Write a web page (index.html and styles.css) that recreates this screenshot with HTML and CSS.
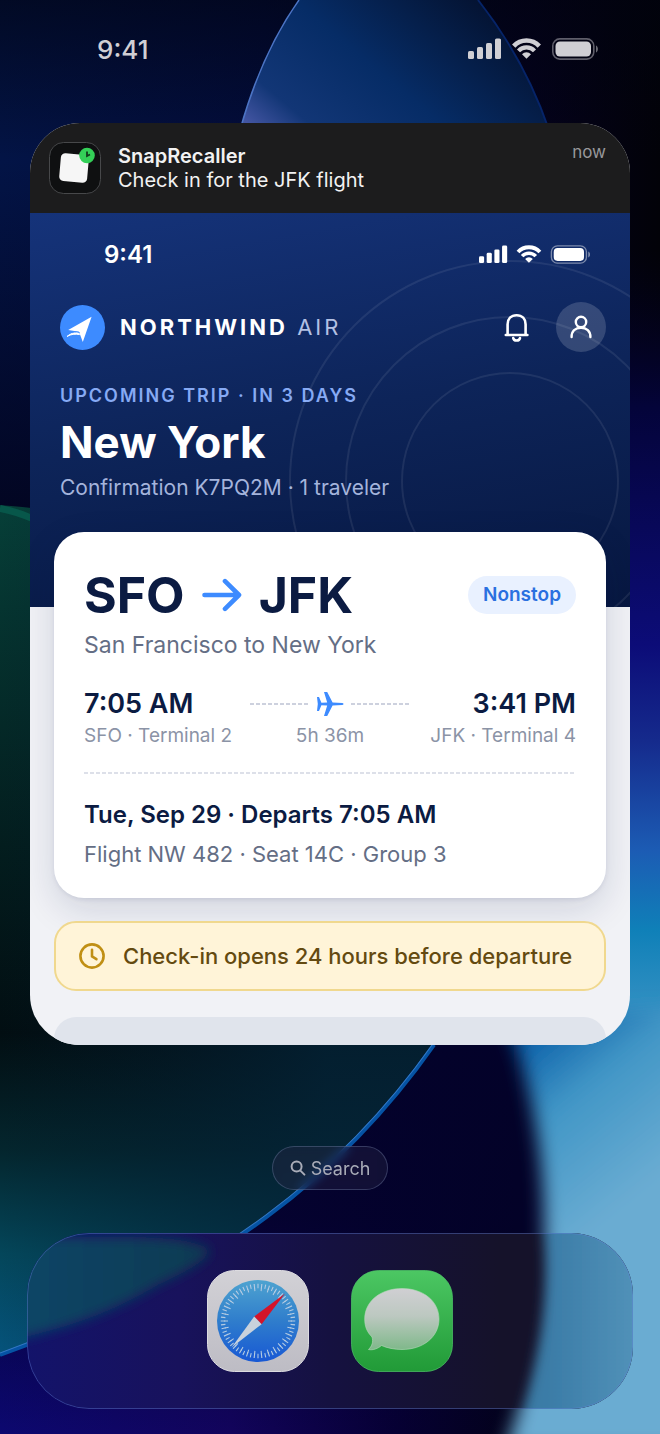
FILE: index.html
```html
<!DOCTYPE html>
<html lang="en">
<head>
    <meta charset="UTF-8">
    <meta name="viewport" content="width=device-width, initial-scale=1.0">
    <title>SnapRecaller</title>
    <link rel="stylesheet" href="styles.css">
</head>
<body>
    <!-- Shared icons -->
    <svg class="icon-defs" aria-hidden="true">
        <symbol id="status-icons" viewBox="0 0 130 22">
            <g fill="currentColor">
                <rect x="0" y="13" width="6" height="8" rx="1.6"/>
                <rect x="9" y="9" width="6" height="12" rx="1.6"/>
                <rect x="18" y="5" width="6" height="16" rx="1.6"/>
                <rect x="27" y="0.5" width="6" height="20.5" rx="1.6"/>
                <path d="M58.5 20.8 L54 16.2 A6.4 6.4 0 0 1 63 16.2 Z"/>
                <rect x="87.5" y="3.5" width="35.5" height="15" rx="4.5"/>
                <path d="M128 7.5 C130.6 8.8 130.6 13.2 128 14.5 Z" opacity="0.5"/>
            </g>
            <g fill="none" stroke="currentColor">
                <path d="M45.7 8.1 A17.5 17.5 0 0 1 71.3 8.1" stroke-width="4.6"/>
                <path d="M50.5 12.9 A11 11 0 0 1 66.5 12.9" stroke-width="4.2"/>
                <rect x="84.8" y="0.9" width="41" height="20.2" rx="7" stroke-width="1.6" opacity="0.45"/>
            </g>
        </symbol>
    </svg>

    <div class="phone">
        <svg class="wallpaper" viewBox="0 0 660 1434" preserveAspectRatio="none" aria-hidden="true">
            <defs>
                <linearGradient id="base" x1="0" y1="0" x2="1" y2="0">
                    <stop offset="0" stop-color="#031446"/>
                    <stop offset="0.4" stop-color="#030d3d"/>
                    <stop offset="0.8" stop-color="#04021e"/>
                    <stop offset="1" stop-color="#020208"/>
                </linearGradient>
                <linearGradient id="topShade" x1="0" y1="0" x2="0" y2="1">
                    <stop offset="0" stop-color="#01030f" stop-opacity="0.6"/>
                    <stop offset="1" stop-color="#01030f" stop-opacity="0"/>
                </linearGradient>
                <linearGradient id="leftShade" x1="0" y1="0" x2="0" y2="1">
                    <stop offset="0" stop-color="#02031c" stop-opacity="0"/>
                    <stop offset="1" stop-color="#02031c" stop-opacity="0.85"/>
                </linearGradient>
                <linearGradient id="rightEdge" x1="0" y1="0" x2="0" y2="1">
                    <stop offset="0" stop-color="#03021e" stop-opacity="0"/>
                    <stop offset="0.2" stop-color="#04043a"/>
                    <stop offset="0.5" stop-color="#0c0c78"/>
                    <stop offset="0.62" stop-color="#152a8c"/>
                    <stop offset="0.76" stop-color="#1c5cb4"/>
                    <stop offset="0.86" stop-color="#0f80b8"/>
                    <stop offset="1" stop-color="#4196c6"/>
                </linearGradient>
                <linearGradient id="night" x1="0" y1="0" x2="1" y2="0">
                    <stop offset="0" stop-color="#0c0870"/>
                    <stop offset="0.35" stop-color="#12045c"/>
                    <stop offset="0.6" stop-color="#060034"/>
                    <stop offset="0.78" stop-color="#03021a"/>
                </linearGradient>
                <linearGradient id="nightShade" x1="0" y1="0" x2="0" y2="1">
                    <stop offset="0" stop-color="#03022a"/>
                    <stop offset="0.5" stop-color="#03022a" stop-opacity="0.85"/>
                    <stop offset="1" stop-color="#03022a" stop-opacity="0"/>
                </linearGradient>
                <linearGradient id="orb" x1="0" y1="0.9" x2="1" y2="0.4">
                    <stop offset="0" stop-color="#4355a2"/>
                    <stop offset="0.16" stop-color="#123676"/>
                    <stop offset="0.5" stop-color="#062c66"/>
                    <stop offset="1" stop-color="#041230"/>
                </linearGradient>
                <linearGradient id="teal" x1="0" y1="505" x2="0" y2="1355" gradientUnits="userSpaceOnUse">
                    <stop offset="0" stop-color="#063f38"/>
                    <stop offset="0.12" stop-color="#053430"/>
                    <stop offset="0.4" stop-color="#031d1e"/>
                    <stop offset="0.62" stop-color="#020e12"/>
                    <stop offset="0.76" stop-color="#04262e"/>
                    <stop offset="0.88" stop-color="#04465a"/>
                    <stop offset="1" stop-color="#05537c"/>
                </linearGradient>
                <linearGradient id="tealShade" x1="0" y1="0" x2="1" y2="0">
                    <stop offset="0" stop-color="#04182c" stop-opacity="0"/>
                    <stop offset="0.7" stop-color="#042236" stop-opacity="0.8"/>
                </linearGradient>
                <linearGradient id="glow" x1="520" y1="1040" x2="640" y2="1190" gradientUnits="userSpaceOnUse">
                    <stop offset="0" stop-color="#0a5fa8"/>
                    <stop offset="0.4" stop-color="#4196c6"/>
                    <stop offset="1" stop-color="#6aacd2"/>
                </linearGradient>
                <filter id="soft" x="-20%" y="-20%" width="140%" height="140%">
                    <feGaussianBlur stdDeviation="9"/>
                </filter>
            </defs>
            <rect width="660" height="1434" fill="url(#base)"/>
            <rect width="660" height="160" fill="url(#topShade)"/>
            <rect y="160" width="200" height="350" fill="url(#leftShade)"/>
            <path d="M299 0 C272 38 254 80 240 130 H549 C532 80 508 38 478 0 Z" fill="url(#orb)"/>
            <path d="M299 0 C272 38 254 80 240 130" fill="none" stroke="#4c74c4" stroke-width="1.5"/>
            <path d="M478 0 C508 38 532 80 549 130" fill="none" stroke="#062468" stroke-width="2"/>
            <rect y="1000" width="660" height="434" fill="url(#night)"/>
            <rect y="1000" width="660" height="434" fill="url(#nightShade)"/>
            <rect x="600" y="250" width="60" height="790" fill="url(#rightEdge)"/>
            <path d="M490 990 C540 1070 575 1260 505 1450 H700 V1010 H600 Z" fill="url(#glow)" filter="url(#soft)"/>
            <path d="M0 505 C300 520 560 870 433 1045 C345 1170 220 1275 0 1355 Z" fill="url(#teal)"/>
            <path d="M0 505 C300 520 560 870 433 1045 C345 1170 220 1275 0 1355 Z" fill="url(#tealShade)"/>
            <path d="M0 508 Q16 511 32 518" fill="none" stroke="#07574a" stroke-width="7"/>
            <path d="M434 1044 C346 1169 221 1274 0 1354" fill="none" stroke="#0553a4" stroke-width="4"/>
            <path d="M433 1043 C345 1167 220 1272 0 1352" fill="none" stroke="#3477c4" stroke-width="1"/>
        </svg>

        <div class="status-bar">
            <span class="status-time">9:41</span>
            <svg class="status-icons" role="img" aria-label="Signal, Wi-Fi and battery"><use href="#status-icons"/></svg>
        </div>

        <article class="notification">
            <header class="notification-header">
                <svg class="app-icon" viewBox="0 0 52 52" aria-hidden="true">
                    <rect x="0.5" y="0.5" width="51" height="51" rx="14" fill="#0f1011" stroke="#47484a"/>
                    <rect x="11" y="12" width="28" height="28" rx="4.5" fill="#f6f6f6" transform="rotate(5 25 26)"/>
                    <circle cx="38" cy="13.5" r="7.8" fill="#34d058"/>
                    <path d="M38 9.5 V14 L41 12.5" fill="none" stroke="#123c1d" stroke-width="1.8"/>
                </svg>
                <div class="notification-text">
                    <h1 class="notification-title">SnapRecaller</h1>
                    <p class="notification-body">Check in for the JFK flight</p>
                </div>
                <time class="notification-time">now</time>
            </header>

            <!-- Airline app preview -->
            <section class="hero">
                <svg class="rings" viewBox="0 0 345 394" aria-hidden="true">
                    <g fill="none" stroke="#ffffff" stroke-opacity="0.08" stroke-width="2">
                        <circle cx="225" cy="268" r="108"/>
                        <circle cx="225" cy="268" r="164"/>
                        <circle cx="225" cy="268" r="220"/>
                    </g>
                </svg>
                <div class="hero-status">
                    <span class="status-time">9:41</span>
                    <svg class="hero-status-icons" role="img" aria-label="Signal, Wi-Fi and battery"><use href="#status-icons"/></svg>
                </div>
                <div class="brand-row">
                    <svg class="brand-logo" viewBox="0 0 45 45" aria-hidden="true">
                        <circle cx="22.5" cy="22.5" r="22.5" fill="#3d8bff"/>
                        <path d="M31.6 11.8 L8.2 25 L19 26.8 L22.8 37 Z" fill="#fff"/>
                        <path d="M7 31.5 C11 29 15.5 28.8 19.5 29.6 L18.5 27.5 C14.5 27.4 10.5 28.2 7 31.5 Z" fill="#fff" stroke="#fff"/>
                        <path d="M9.5 28 C13 26.6 16 26.5 19.5 27.5" fill="none" stroke="#3d8bff"/>
                    </svg>
                    <div class="brand-name"><strong>NORTHWIND</strong> AIR</div>
                    <button class="bell-btn" type="button" aria-label="Notifications">
                        <svg viewBox="0 0 28 30" fill="none" stroke="#fff" stroke-width="2.6" stroke-linecap="round" stroke-linejoin="round">
                            <path d="M4.6 22 V12.4 C4.6 6.8 8 3.2 13.6 3.2 C19.2 3.2 22.6 6.8 22.6 12.4 V22"/>
                            <path d="M2.8 23 H24.4"/>
                            <path d="M10.2 26 C10.8 29.4 16.4 29.4 17 26"/>
                        </svg>
                    </button>
                    <button class="profile-btn" type="button" aria-label="Profile">
                        <svg viewBox="0 0 28 28" fill="none" stroke="#fff" stroke-width="2.4" stroke-linecap="round">
                            <circle cx="14" cy="9" r="5.2"/>
                            <path d="M4.6 24 C4.6 18.2 8.4 14.8 14 14.8 C19.6 14.8 23.4 18.2 23.4 24"/>
                        </svg>
                    </button>
                </div>
                <p class="eyebrow">UPCOMING TRIP · IN 3 DAYS</p>
                <h2 class="trip-title">New York</h2>
                <p class="trip-sub">Confirmation K7PQ2M · 1 traveler</p>
            </section>

            <section class="trip">
                <div class="ticket">
                    <div class="route">
                        <span>SFO</span>
                        <svg class="route-arrow" viewBox="0 0 40 34" fill="none" stroke="#3d8bff" stroke-width="4.6" stroke-linecap="round" stroke-linejoin="round" role="img" aria-label="to">
                            <path d="M2.5 17 H36.5 M23 3.2 L37 17 L23 30.8"/>
                        </svg>
                        <span>JFK</span>
                        <span class="badge">Nonstop</span>
                    </div>
                    <p class="cities">San Francisco to New York</p>

                    <div class="times">
                        <div class="stop">
                            <p class="clock">7:05 AM</p>
                            <p class="terminal">SFO · Terminal 2</p>
                        </div>
                        <div class="leg">
                            <div class="leg-line">
                                <span class="dash"></span>
                                <svg class="plane" viewBox="0 0 28 26" fill="#3d8bff" aria-hidden="true">
                                    <path d="M8 1 H11.2 L16.6 11.6 L26.4 12 C28 12.4 28 13.6 26.4 14 L16.6 14.4 L11.2 25 H8 L11.2 14.4 L5.4 14.2 L3 20 H1 L1.8 13 L1 6 H3 L5.4 11.8 L11.2 11.6 Z"/>
                                </svg>
                                <span class="dash"></span>
                            </div>
                            <p class="terminal">5h 36m</p>
                        </div>
                        <div class="stop stop-end">
                            <p class="clock">3:41 PM</p>
                            <p class="terminal">JFK · Terminal 4</p>
                        </div>
                    </div>

                    <div class="divider"></div>
                    <p class="departs">Tue, Sep 29 · Departs 7:05 AM</p>
                    <p class="details">Flight NW 482 · Seat 14C · Group 3</p>
                </div>

                <div class="alert">
                    <svg class="alert-icon" viewBox="0 0 26 26" fill="none" stroke="#c08f14" stroke-width="2.6" stroke-linecap="round" stroke-linejoin="round" aria-hidden="true">
                        <circle cx="13" cy="13" r="11.6"/>
                        <path d="M13 6.8 V13.4 L17.4 16.2"/>
                    </svg>
                    <p>Check-in opens 24 hours before departure</p>
                </div>
                <div class="next-card"></div>
            </section>
        </article>

        <button class="search-btn" type="button">
            <svg viewBox="0 0 16 16" fill="none" stroke="currentColor" stroke-width="2" stroke-linecap="round" aria-hidden="true">
                <circle cx="6.6" cy="6.6" r="5"/>
                <path d="M10.4 10.6 L14.4 14.6"/>
            </svg>
            Search
        </button>

        <nav class="dock" aria-label="Dock">
            <svg class="dock-glass" viewBox="0 0 606 175" preserveAspectRatio="none" aria-hidden="true">
                <defs>
                    <linearGradient id="glass" x1="0" y1="0" x2="1" y2="0">
                        <stop offset="0" stop-color="#13136a"/>
                        <stop offset="0.25" stop-color="#18125c"/>
                        <stop offset="0.5" stop-color="#151140"/>
                        <stop offset="0.78" stop-color="#15122a"/>
                        <stop offset="1" stop-color="#15122a"/>
                    </linearGradient>
                    <linearGradient id="glassTeal" x1="0" y1="0" x2="1" y2="0">
                        <stop offset="0" stop-color="#0a4668"/>
                        <stop offset="1" stop-color="#0e3a52"/>
                    </linearGradient>
                    <linearGradient id="glassBlue" x1="0" y1="0" x2="1" y2="0">
                        <stop offset="0.2" stop-color="#3a7ba6"/>
                        <stop offset="1" stop-color="#5797bd"/>
                    </linearGradient>
                    <filter id="glassBlur" x="-20%" y="-30%" width="140%" height="160%">
                        <feGaussianBlur stdDeviation="6"/>
                    </filter>
                </defs>
                <rect width="606" height="175" fill="url(#glass)"/>
                <path d="M-20 4 H90 C130 4 165 6 182 16 C186 24 160 38 130 52 C90 76 50 92 -20 108 Z" fill="url(#glassTeal)" filter="url(#glassBlur)"/>
                <path d="M515 -20 C524 60 514 120 490 195 H630 V-20 Z" fill="url(#glassBlue)" filter="url(#glassBlur)"/>
            </svg>
            <a class="dock-app" href="#" aria-label="Safari">
                <svg viewBox="0 0 102 102" aria-hidden="true">
                    <defs>
                        <linearGradient id="safariBg" x1="0" y1="0" x2="0" y2="1">
                            <stop offset="0" stop-color="#d2d1d6"/>
                            <stop offset="1" stop-color="#bdbcc4"/>
                        </linearGradient>
                        <linearGradient id="safariDial" x1="0" y1="0" x2="0" y2="1">
                            <stop offset="0" stop-color="#4ea3d0"/>
                            <stop offset="0.5" stop-color="#2f7dcc"/>
                            <stop offset="1" stop-color="#1858d4"/>
                        </linearGradient>
                    </defs>
                    <rect x="0.5" y="0.5" width="101" height="101" rx="27" fill="url(#safariBg)" stroke="#dcdbe0"/>
                    <circle cx="51" cy="51" r="41" fill="url(#safariDial)"/>
                    <circle cx="51" cy="51" r="35" fill="none" stroke="#b4cbe2" stroke-width="4.5" pathLength="60" stroke-dasharray="0.3 0.7" stroke-dashoffset="0.15"/>
                    <circle cx="51" cy="51" r="32" fill="none" stroke="#b4cbe2" stroke-width="4" pathLength="30" stroke-dasharray="0.16 0.84" stroke-dashoffset="0.08"/>
                    <path d="M78 23.5 L47.2 46.6 L54.6 54.2 Z" fill="#d4142a"/>
                    <path d="M24.6 77.4 L47.2 46.6 L54.6 54.2 Z" fill="#c9d2dc"/>
                </svg>
            </a>
            <a class="dock-app" href="#" aria-label="Messages">
                <svg viewBox="0 0 102 102" aria-hidden="true">
                    <defs>
                        <linearGradient id="messagesBg" x1="0" y1="0" x2="0" y2="1">
                            <stop offset="0" stop-color="#4cc763"/>
                            <stop offset="1" stop-color="#219a37"/>
                        </linearGradient>
                        <linearGradient id="bubble" x1="0" y1="0" x2="0" y2="1">
                            <stop offset="0" stop-color="#d0cfd3"/>
                            <stop offset="0.45" stop-color="#bcc8c0"/>
                            <stop offset="1" stop-color="#7fb88a"/>
                        </linearGradient>
                    </defs>
                    <rect x="0.5" y="0.5" width="101" height="101" rx="27" fill="url(#messagesBg)" stroke="#4fc968" stroke-opacity="0.7"/>
                    <path d="M51 18.5 C72 18.5 88 31 88 49 C88 67 72 79.5 51 79.5 C43.5 79.5 36 78 30.5 75.5 C27 78.5 22 80.5 17.5 79.5 C21 76 22.5 72 21 67 C16 62 13.7 56.5 13.7 49 C13.7 31 30 18.5 51 18.5 Z" fill="url(#bubble)" stroke="#b9d8be" stroke-opacity="0.6"/>
                </svg>
            </a>
        </nav>
    </div>
</body>
</html>
```

FILE: styles.css
```css
/* General Page Styling */
* {
    box-sizing: border-box;
}

body {
    font-family: Inter, 'Liberation Sans', sans-serif;
    margin: 0;
    background: #04021e;
}

h1, h2, p {
    margin: 0;
}

button {
    font-family: inherit;
    border: none;
    padding: 0;
    background: none;
    cursor: pointer;
}

svg {
    display: block;
}

.icon-defs {
    position: absolute;
    width: 0;
    height: 0;
}

/* Home Screen */
.phone {
    position: relative;
    min-height: 100vh;
    padding-bottom: 26px;
    display: flex;
    flex-direction: column;
    overflow: hidden;
}

.wallpaper {
    position: absolute;
    inset: 0;
    width: 100%;
    height: 100%;
    z-index: -1;
}

.status-bar {
    display: flex;
    justify-content: space-between;
    align-items: center;
    height: 98px;
    padding: 0 62px 0 97px;
    color: #d0cfd4;
    font-size: 26px;
    font-weight: 500;
}

.status-icons {
    width: 130px;
    height: 22px;
}

/* Notification */
.notification {
    margin: 25px 30px 0;
    border-radius: 50px;
    overflow: hidden;
    background: #f1f2f6;
}

.notification-header {
    display: flex;
    align-items: center;
    gap: 17px;
    height: 90px;
    padding: 0 24px 0 19px;
    background: #1c1c1d;
    color: #f2f2f2;
}

.app-icon {
    width: 52px;
    height: 52px;
}

.notification-text {
    flex: 1;
    line-height: 24px;
}

.notification-title {
    font-size: 20px;
    font-weight: 600;
}

.notification-body {
    font-size: 20px;
}

.notification-time {
    align-self: flex-start;
    margin-top: 18px;
    font-size: 17px;
    line-height: 22px;
    color: #98989b;
}

/* Hero */
.hero {
    position: relative;
    padding: 22px 24px 105px 30px;
    background: linear-gradient(170deg, #15337a 0%, #0d2459 50%, #071740 100%);
    color: #ffffff;
}

.rings {
    position: absolute;
    top: 0;
    right: 0;
    width: 345px;
    height: 394px;
}

.hero-status {
    display: flex;
    justify-content: space-between;
    align-items: center;
    height: 38px;
    padding: 0 16px 0 44px;
    font-size: 24px;
    font-weight: 600;
}

.hero-status-icons {
    width: 111px;
    height: 19px;
}

.brand-row {
    position: relative;
    display: flex;
    align-items: center;
    margin: 29px 0 30px;
}

.brand-logo {
    width: 45px;
    height: 45px;
}

.brand-name {
    flex: 1;
    margin-left: 15px;
    font-size: 22px;
    letter-spacing: 3px;
    color: #b3c1e4;
}

.brand-name strong {
    font-weight: 700;
    color: #ffffff;
}

.bell-btn svg {
    width: 28px;
    height: 30px;
}

.profile-btn {
    display: flex;
    justify-content: center;
    align-items: center;
    width: 50px;
    height: 50px;
    margin-left: 25px;
    border-radius: 50%;
    background: rgba(255, 255, 255, 0.16);
}

.profile-btn svg {
    width: 28px;
    height: 28px;
}

.eyebrow {
    font-size: 18px;
    font-weight: 600;
    line-height: 28px;
    letter-spacing: 2px;
    color: #86aaf4;
}

.trip-title {
    font-size: 44px;
    font-weight: 700;
    line-height: 64px;
}

.trip-sub {
    font-size: 21px;
    line-height: 28px;
    color: #a4b4dc;
}

/* Ticket */
.trip {
    position: relative;
    padding: 0 24px;
    margin-top: -75px;
}

.ticket {
    padding: 30px 30px 24px;
    border-radius: 30px;
    background: #ffffff;
    color: #0b1b42;
    box-shadow: 0 12px 36px rgba(16, 28, 80, 0.14), 0 2px 4px rgba(16, 28, 80, 0.08);
}

.route {
    display: flex;
    align-items: center;
    gap: 17px;
    font-size: 50px;
    font-weight: 700;
    line-height: 66px;
}

.route-arrow {
    width: 40px;
    height: 34px;
}

.badge {
    margin-left: auto;
    padding: 0 15px;
    border-radius: 19px;
    background: #e9f1ff;
    color: #2a70e0;
    font-size: 19px;
    font-weight: 600;
    line-height: 38px;
}

.cities {
    font-size: 23px;
    line-height: 34px;
    color: #646e85;
}

.times {
    display: grid;
    grid-template-columns: 1fr 160px 1fr;
    margin-top: 24px;
}

.stop-end {
    text-align: right;
}

.clock {
    font-size: 27px;
    font-weight: 600;
    line-height: 36px;
}

.terminal {
    font-size: 19px;
    line-height: 28px;
    color: #8b93a6;
    white-space: nowrap;
}

.leg {
    text-align: center;
}

.leg-line {
    display: flex;
    align-items: center;
    gap: 7px;
    height: 36px;
}

.plane {
    width: 28px;
    height: 26px;
}

.dash {
    flex: 1;
    height: 2px;
    background: repeating-linear-gradient(90deg, #cdd1de 0 4px, transparent 4px 6px);
}

.divider {
    height: 2px;
    margin: 22px 0;
    background: repeating-linear-gradient(90deg, #dde0e9 0 4px, transparent 4px 6px);
}

.departs {
    font-size: 24px;
    font-weight: 600;
    line-height: 38px;
}

.details {
    font-size: 22px;
    line-height: 40px;
    color: #646e85;
}

/* Alert */
.alert {
    display: flex;
    align-items: center;
    gap: 18px;
    height: 70px;
    margin-top: 23px;
    padding: 0 23px;
    border: 2px solid #f0d88e;
    border-radius: 22px;
    background: #fff4d8;
    color: #644a10;
    font-size: 22px;
    font-weight: 500;
}

.alert-icon {
    width: 26px;
    height: 26px;
    flex-shrink: 0;
}

.next-card {
    height: 28px;
    margin-top: 26px;
    border-radius: 22px 22px 0 0;
    background: #e0e4ec;
}

/* Search */
.search-btn {
    display: flex;
    justify-content: center;
    align-items: center;
    align-self: center;
    gap: 5px;
    height: 44px;
    margin: 101px 0 43px;
    padding: 0 17px;
    border: 1px solid rgba(140, 160, 200, 0.3);
    border-radius: 22px;
    background: rgba(40, 38, 70, 0.4);
    backdrop-filter: blur(5px);
    color: #a9acb8;
    font-size: 18px;
}

.search-btn svg {
    width: 16px;
    height: 16px;
}

/* Dock */
.dock {
    position: relative;
    display: flex;
    justify-content: center;
    gap: 42px;
    margin: 0 27px;
    padding: 37px 0;
    border-radius: 62px;
    overflow: hidden;
}

.dock::after {
    content: "";
    position: absolute;
    inset: 0;
    border: 1px solid rgba(100, 130, 220, 0.4);
    border-radius: 62px;
    pointer-events: none;
}

.dock-glass {
    position: absolute;
    inset: 0;
    width: 100%;
    height: 100%;
}

.dock-app {
    position: relative;
    width: 102px;
    height: 102px;
}
```
